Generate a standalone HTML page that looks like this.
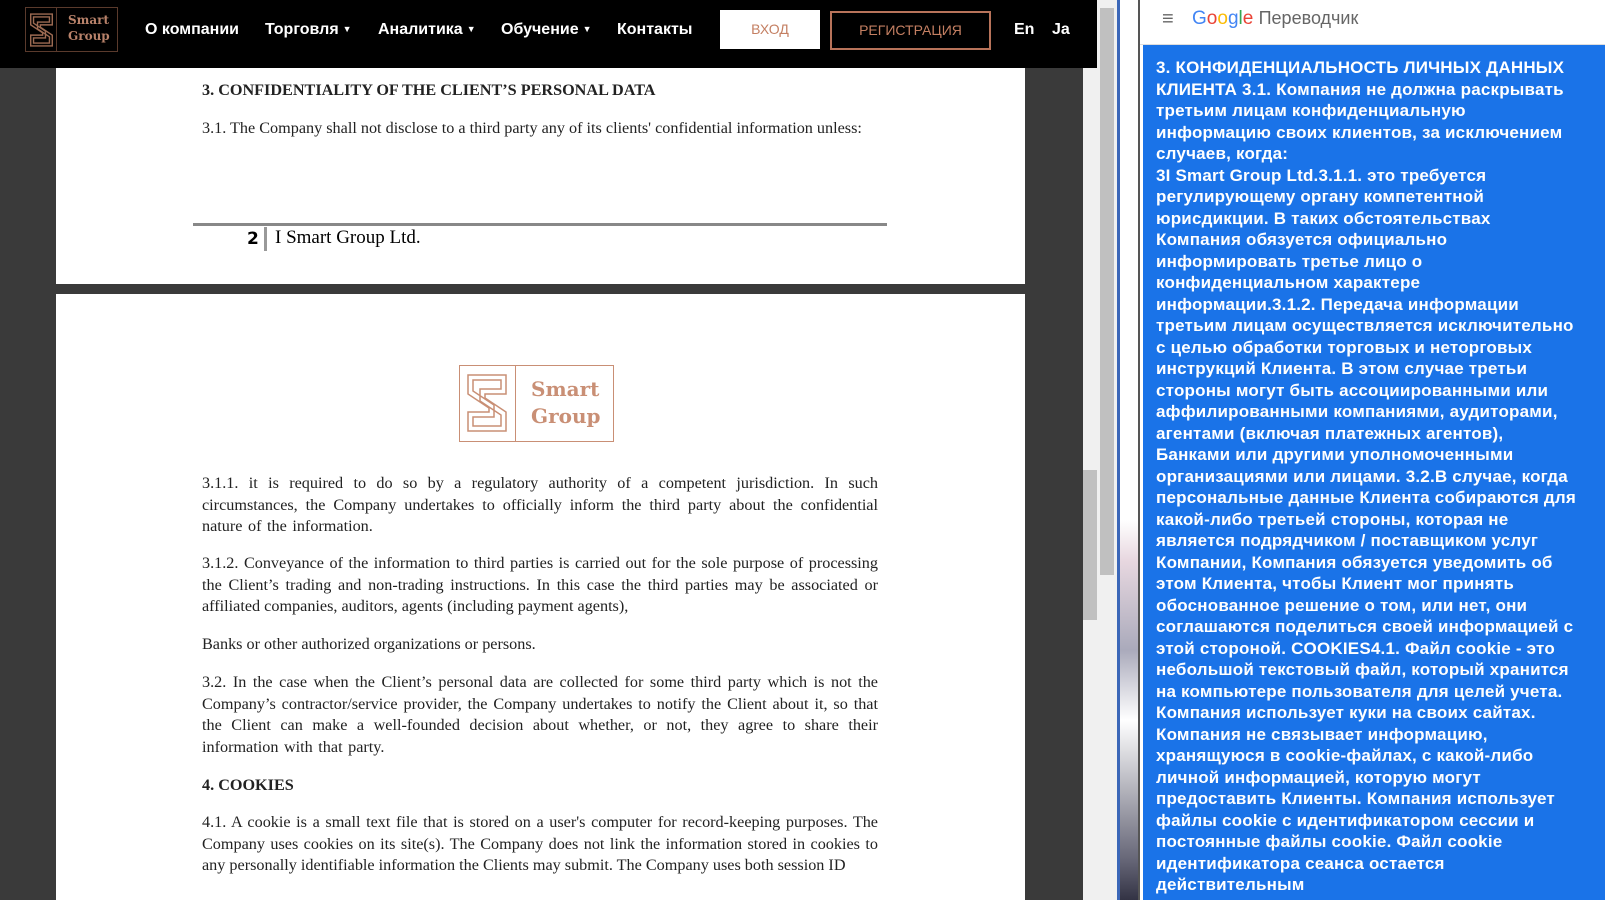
<!DOCTYPE html>
<html><head><meta charset="utf-8"><style>
*{margin:0;padding:0;box-sizing:border-box}
body{width:1605px;height:900px;overflow:hidden;background:#fff;position:relative;font-family:"Liberation Sans",sans-serif}
.abs{position:absolute}
#bg{left:0;top:0;width:1083px;height:900px;background:#3a3a3a}
.page{background:#fff;left:56px;width:969px}
.doc{font-family:"Liberation Serif",serif;font-size:16.2px;color:#222;line-height:21.5px;position:absolute;left:202px;width:676px;text-align:justify;word-spacing:0}
.ws{word-spacing:1.5px}
.nav{left:0;top:0;width:1100px;height:68px;background:#000}
.nav a{position:absolute;top:21px;color:#fff;font-weight:bold;font-size:16px}
.caret{font-size:9px;vertical-align:2px;margin-left:4px}
.tr{color:#fff;font-size:17px;font-weight:bold;letter-spacing:0.2px;line-height:21.5px;font-family:"Liberation Sans",sans-serif;white-space:nowrap}
</style></head><body>
<div id="bg" class="abs"></div>
<div class="abs page" style="top:68px;height:216px"></div>
<div class="abs page" style="top:294px;height:606px"></div>
<div class="doc" style="top:80px;font-weight:bold">3. CONFIDENTIALITY OF THE CLIENT’S PERSONAL DATA</div>
<div class="doc" style="top:118px;width:700px;text-align:left">3.1. The Company shall not disclose to a third party any of its clients' confidential information unless:</div>
<div class="abs" style="left:193px;top:223px;width:694px;height:3px;background:#888"></div>
<div class="abs" style="left:247px;top:229px;font-weight:bold;font-size:17px;font-family:'DejaVu Sans',sans-serif">2</div>
<div class="abs" style="left:264px;top:227px;width:3px;height:24px;background:#999"></div>
<div class="abs" style="left:275px;top:227px;font-family:'Liberation Serif',serif;font-size:19px">I Smart Group Ltd.</div>
<div class="abs" style="left:459px;top:365px;width:155px;height:77px;border:1px solid #c98f75"></div>
<div class="abs" style="left:515px;top:365px;width:1px;height:77px;background:#c98f75"></div>
<svg class="abs" style="left:465px;top:372px" width="44" height="62" viewBox="0 0 44 62" fill="none" stroke="#c98f75" stroke-width="1.5"><path d="M3 3H41V22H20V26L41 40V59H3V40H24V36L3 22Z"/><path d="M8 8H36V17H15V29L36 43V54H8V45H29V33L8 19Z"/></svg>
<div class="abs" style="left:531px;top:376px;color:#c98f75;font-family:'DejaVu Serif',serif;font-weight:bold;font-size:20px;line-height:27px">Smart<br>Group</div>
<div class="doc ws" style="top:473px">3.1.1. it is required to do so by a regulatory authority of a competent jurisdiction. In such circumstances, the Company undertakes to officially inform the third party about the confidential nature of the information.</div>
<div class="doc" style="top:553px">3.1.2. Conveyance of the information to third parties is carried out for the sole purpose of processing the Client’s trading and non-trading instructions. In this case the third parties may be associated or affiliated companies, auditors, agents (including payment agents),</div>
<div class="doc" style="top:634px">Banks or other authorized organizations or persons.</div>
<div class="doc ws" style="top:672px">3.2. In the case when the Client’s personal data are collected for some third party which is not the Company’s contractor/service provider, the Company undertakes to notify the Client about it, so that the Client can make a well-founded decision about whether, or not, they agree to share their information with that party.</div>
<div class="doc" style="top:775px;font-weight:bold">4. COOKIES</div>
<div class="doc" style="top:812px">4.1. A cookie is a small text file that is stored on a user's computer for record-keeping purposes. The Company uses cookies on its site(s). The Company does not link the information stored in cookies to any personally identifiable information the Clients may submit. The Company uses both session ID</div>
<div class="abs nav">
<div class="abs" style="left:25px;top:7px;width:93px;height:45px;border:1px solid #5a3a2c"></div>
<div class="abs" style="left:56px;top:7px;width:1px;height:45px;background:#5a3a2c"></div>
<svg class="abs" style="left:29px;top:11px" width="25" height="38" viewBox="0 0 44 62" fill="none" stroke="#9c6a52" stroke-width="2.5"><path d="M3 3H41V22H20V26L41 40V59H3V40H24V36L3 22Z"/><path d="M8 8H36V17H15V29L36 43V54H8V45H29V33L8 19Z"/></svg>
<div class="abs" style="left:68px;top:12px;color:#b8826a;font-family:'DejaVu Serif',serif;font-weight:bold;font-size:12px;line-height:16px">Smart<br>Group</div>
<a style="left:145px">О компании</a>
<a style="left:265px">Торговля<span class="caret">▼</span></a>
<a style="left:378px">Аналитика<span class="caret">▼</span></a>
<a style="left:501px">Обучение<span class="caret">▼</span></a>
<a style="left:617px">Контакты</a>
<div class="abs" style="left:720px;top:10px;width:100px;height:39px;background:#fff;color:#c47f62;font-size:14px;text-align:center;line-height:39px">ВХОД</div>
<div class="abs" style="left:830px;top:11px;width:161px;height:39px;border:2px solid #b8735a;color:#c47f62;font-size:14px;text-align:center;line-height:35px">РЕГИСТРАЦИЯ</div>
<a style="left:1014px">En</a><a style="left:1052px">Ja</a>
</div>
<div class="abs" style="left:1083px;top:68px;width:14px;height:832px;background:#f0f0f0"></div>
<div class="abs" style="left:1083px;top:470px;width:14px;height:150px;background:#c0c0c0"></div>
<div class="abs" style="left:1097px;top:0;width:20px;height:900px;background:#f0f0f0"></div>
<div class="abs" style="left:1100px;top:8px;width:14px;height:567px;background:#c0c0c0"></div>
<div class="abs" style="left:1117px;top:0;width:3px;height:900px;background:#3b67b8"></div>
<div class="abs" style="left:1120px;top:0;width:20px;height:900px;background:linear-gradient(#fff 0,#fff 520px,#e8d8e0 560px,#aab 650px,#fff 720px,#667 860px,#334 900px)"></div>
<div class="abs" style="left:1138px;top:0;width:2px;height:900px;background:#555"></div>
<div class="abs" style="left:1140px;top:0;width:465px;height:45px;background:#fff;border-bottom:1px solid #ddd"></div>
<div class="abs" style="left:1162px;top:8px;font-size:20px;color:#666">≡</div>
<div class="abs" style="left:1192px;top:8px;font-size:19px"><span style="color:#4285f4">G</span><span style="color:#ea4335">o</span><span style="color:#fbbc05">o</span><span style="color:#4285f4">g</span><span style="color:#34a853">l</span><span style="color:#ea4335">e</span> <span style="color:#666;font-size:18px">Переводчик</span></div>
<div class="abs" style="left:1143px;top:45px;width:462px;height:855px;background:#1a73e8;overflow:hidden">
<div class="abs tr" style="left:13px;top:12px">3. КОНФИДЕНЦИАЛЬНОСТЬ ЛИЧНЫХ ДАННЫХ<br>КЛИЕНТА 3.1. Компания не должна раскрывать<br>третьим лицам конфиденциальную<br>информацию своих клиентов, за исключением<br>случаев, когда:<br>3I Smart Group Ltd.3.1.1. это требуется<br>регулирующему органу компетентной<br>юрисдикции. В таких обстоятельствах<br>Компания обязуется официально<br>информировать третье лицо о<br>конфиденциальном характере<br>информации.3.1.2. Передача информации<br>третьим лицам осуществляется исключительно<br>с целью обработки торговых и неторговых<br>инструкций Клиента. В этом случае третьи<br>стороны могут быть ассоциированными или<br>аффилированными компаниями, аудиторами,<br>агентами (включая платежных агентов),<br>Банками или другими уполномоченными<br>организациями или лицами. 3.2.В случае, когда<br>персональные данные Клиента собираются для<br>какой-либо третьей стороны, которая не<br>является подрядчиком / поставщиком услуг<br>Компании, Компания обязуется уведомить об<br>этом Клиента, чтобы Клиент мог принять<br>обоснованное решение о том, или нет, они<br>соглашаются поделиться своей информацией с<br>этой стороной. COOKIES4.1. Файл cookie - это<br>небольшой текстовый файл, который хранится<br>на компьютере пользователя для целей учета.<br>Компания использует куки на своих сайтах.<br>Компания не связывает информацию,<br>хранящуюся в cookie-файлах, с какой-либо<br>личной информацией, которую могут<br>предоставить Клиенты. Компания использует<br>файлы cookie с идентификатором сессии и<br>постоянные файлы cookie. Файл cookie<br>идентификатора сеанса остается<br>действительным</div>
</div>
</body></html>
